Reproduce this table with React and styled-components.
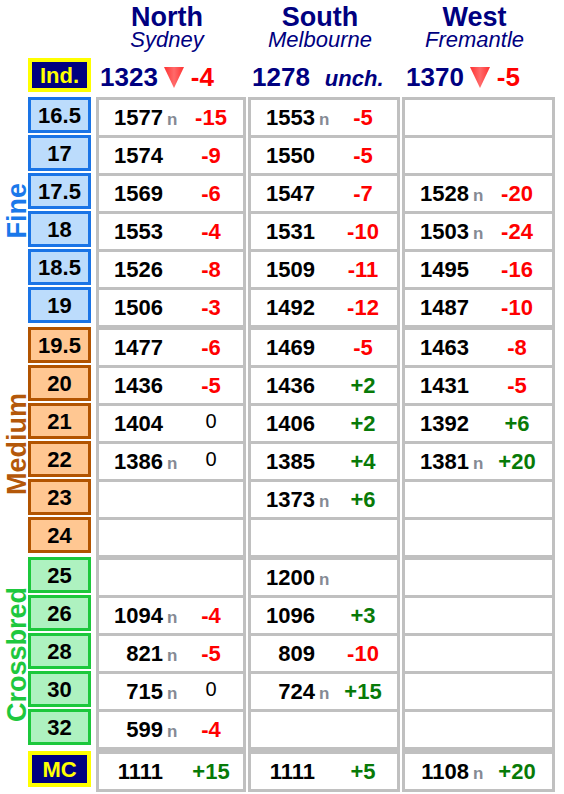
import React from 'react';
import styled, { createGlobalStyle } from 'styled-components';

const GlobalStyle = createGlobalStyle`
  body {
    margin: 0;
    background: #fff;
  }
`;

const COLS = '26px 66px 150px 152px 153px';
const NAVY = '#000080';
const GRID = '#c0c0c0';

const kinds = {
  fine: { border: '#1a74e6', fill: '#bcdcfc', text: '#1a78ea' },
  medium: { border: '#b25400', fill: '#ffc792', text: '#b4580a' },
  cross: { border: '#1cc83c', fill: '#aef2c0', text: '#1ec83e' },
  mc: { border: '#ffff00', fill: NAVY, text: '#ffff00' }
};

const Page = styled.div`
  width: 564px;
  height: 794px;
  overflow: hidden;
  font-family: "Liberation Sans", Arial, sans-serif;
  color: #000;
`;

const Head = styled.div`
  display: grid;
  grid-template-columns: ${COLS};
  column-gap: 2px;
  height: 50px;
`;

const Region = styled.div`
  display: flex;
  flex-direction: column;
  align-items: center;
  padding-right: 8px;
  color: ${NAVY};
`;

const RegionName = styled.div`
  padding-top: 5px;
  font-size: 27px;
  font-weight: bold;
  line-height: 25px;
`;

const City = styled.div`
  font-size: 22px;
  font-style: italic;
  line-height: 20px;
`;

const IndRow = styled.div`
  display: grid;
  grid-template-columns: ${COLS};
  column-gap: 2px;
  height: 34px;
  margin-top: 8px;
  margin-bottom: 5px;
`;

const IndValue = styled.div`
  display: flex;
  align-items: baseline;
  padding: 4px 0 0 4px;
  line-height: 30px;
`;

const Big = styled.span`
  font-size: 26px;
  font-weight: bold;
  color: ${p => p.$red ? '#ff0000' : NAVY};
`;

const Unch = styled.span`
  margin-left: 15px;
  font-size: 22px;
  font-weight: bold;
  font-style: italic;
  color: ${NAVY};
`;

const Down = styled.svg`
  width: 20px;
  height: 21px;
  margin: 0 7px 0 6px;
  transform: translateY(2px);
`;

const Group = styled.div`
  display: grid;
  grid-template-columns: ${COLS};
  column-gap: 2px;
`;

const Side = styled.div`
  grid-row: span ${p => p.$rows};
  display: flex;
  align-items: center;
  padding-left: 6px;
  padding-top: ${p => p.$shift}px;
`;

const SideText = styled.div`
  writing-mode: vertical-rl;
  transform: rotate(180deg);
  font-size: 27px;
  font-weight: bold;
  line-height: 23px;
  color: ${p => kinds[p.$kind].text};
`;

const LabelBox = styled.div`
  box-sizing: border-box;
  width: 63px;
  height: ${p => p.$tall ? 36 : 36}px;
  margin-top: ${p => p.$extra}px;
  padding-top: 2px;
  display: flex;
  align-items: center;
  justify-content: center;
  border: ${p => p.$kind === 'mc' ? 4 : 3}px solid ${p => kinds[p.$kind].border};
  background: ${p => kinds[p.$kind].fill};
  color: ${p => p.$kind === 'mc' ? '#ffff00' : '#000'};
  font-size: 22px;
  font-weight: bold;
`;

const IndBox = styled(LabelBox)`
  height: 34px;
  padding-top: 1px;
  color: #ffff00;
`;

const Cell = styled.div`
  box-sizing: border-box;
  height: ${p => 38 + p.$extra + (p.$last ? 3 : 0)}px;
  border: 3px solid ${GRID};
  border-top-width: ${p => 3 + p.$extra}px;
  border-bottom-width: ${p => p.$last ? 3 : 0}px;
  background: #fff;
  display: flex;
  align-items: baseline;
  line-height: 35px;
`;

const Num = styled.span`
  width: 64px;
  text-align: right;
  font-size: 22px;
  font-weight: bold;
`;

const N = styled.span`
  box-sizing: border-box;
  width: 16px;
  padding-left: 4px;
  font-size: 17px;
  font-weight: bold;
  color: #858a94;
`;

const Change = styled.span`
  width: 64px;
  text-align: center;
  font-size: ${p => p.$zero ? 20 : 22}px;
  font-weight: ${p => p.$zero ? 'normal' : 'bold'};
  color: ${p => p.$zero ? '#000' : p.$up ? '#087a08' : '#ff0000'};
  transform: translateY(${p => p.$zero ? -3 : 0}px);
`;

const groups = [
  {
    kind: 'fine', name: 'Fine', extra: 0, shift: 0,
    rows: [
      ['16.5', [1577, 1, -15], [1553, 1, -5], null],
      ['17', [1574, 0, -9], [1550, 0, -5], null],
      ['17.5', [1569, 0, -6], [1547, 0, -7], [1528, 1, -20]],
      ['18', [1553, 0, -4], [1531, 0, -10], [1503, 1, -24]],
      ['18.5', [1526, 0, -8], [1509, 0, -11], [1495, 0, -16]],
      ['19', [1506, 0, -3], [1492, 0, -12], [1487, 0, -10]]
    ]
  },
  {
    kind: 'medium', name: 'Medium', extra: 2, shift: 8,
    rows: [
      ['19.5', [1477, 0, -6], [1469, 0, -5], [1463, 0, -8]],
      ['20', [1436, 0, -5], [1436, 0, 2], [1431, 0, -5]],
      ['21', [1404, 0, 0], [1406, 0, 2], [1392, 0, 6]],
      ['22', [1386, 1, 0], [1385, 0, 4], [1381, 1, 20]],
      ['23', null, [1373, 1, 6], null],
      ['24', null, null, null]
    ]
  },
  {
    kind: 'cross', name: 'Crossbred', extra: 2, shift: 8,
    rows: [
      ['25', null, [1200, 1, null], null],
      ['26', [1094, 1, -4], [1096, 0, 3], null],
      ['28', [821, 1, -5], [809, 0, -10], null],
      ['30', [715, 1, 0], [724, 1, 15], null],
      ['32', [599, 1, -4], null, null]
    ]
  },
  {
    kind: 'mc', name: '', extra: 4, shift: 0, last: true,
    rows: [
      ['MC', [1111, 0, 15], [1111, 0, 5], [1108, 1, 20]]
    ]
  }
];

const regions = [
  { name: 'North', city: 'Sydney', value: 1323, delta: -4 },
  { name: 'South', city: 'Melbourne', value: 1278, unch: true },
  { name: 'West', city: 'Fremantle', value: 1370, delta: -5 }
];

function DownArrow() {
  return (
    <Down viewBox="0 0 20 21">
      <defs>
        <linearGradient id="tri" x1="0" x2="1" y1="0" y2="0">
          <stop offset="0" stopColor="#ff3030" />
          <stop offset="0.5" stopColor="#ff6a6a" />
          <stop offset="1" stopColor="#ff3030" />
        </linearGradient>
      </defs>
      <polygon points="0,0 20,0 10,21" fill="url(#tri)" />
    </Down>
  );
}

function DataCell({ data, extra, last }) {
  if (!data) return <Cell $extra={extra} $last={last} />;
  const [num, isNew, change] = data;
  return (
    <Cell $extra={extra} $last={last}>
      <Num>{num}</Num>
      <N>{isNew ? 'n' : ''}</N>
      {change !== null && (
        <Change $zero={change === 0} $up={change > 0}>
          {change > 0 ? `+${change}` : change}
        </Change>
      )}
    </Cell>
  );
}

export default function App() {
  return (
    <Page>
      <GlobalStyle />
      <Head>
        <div />
        <div />
        {regions.map(r => (
          <Region key={r.name}>
            <RegionName>{r.name}</RegionName>
            <City>{r.city}</City>
          </Region>
        ))}
      </Head>
      <IndRow>
        <div />
        <IndBox $kind="mc" $extra={0}>Ind.</IndBox>
        {regions.map(r => (
          <IndValue key={r.name}>
            <Big>{r.value}</Big>
            {r.unch ? (
              <Unch>unch.</Unch>
            ) : (
              <>
                <DownArrow />
                <Big $red>{r.delta}</Big>
              </>
            )}
          </IndValue>
        ))}
      </IndRow>
      {groups.map(g => (
        <Group key={g.kind}>
          <Side $rows={g.rows.length} $shift={g.shift}>
            {g.name && <SideText $kind={g.kind}>{g.name}</SideText>}
          </Side>
          {g.rows.map((row, i) => {
            const extra = i === 0 ? g.extra : 0;
            const last = g.last && i === g.rows.length - 1;
            return (
              <React.Fragment key={row[0]}>
                <div>
                  <LabelBox $kind={g.kind} $extra={extra}>{row[0]}</LabelBox>
                </div>
                <DataCell data={row[1]} extra={extra} last={last} />
                <DataCell data={row[2]} extra={extra} last={last} />
                <DataCell data={row[3]} extra={extra} last={last} />
              </React.Fragment>
            );
          })}
        </Group>
      ))}
    </Page>
  );
}
